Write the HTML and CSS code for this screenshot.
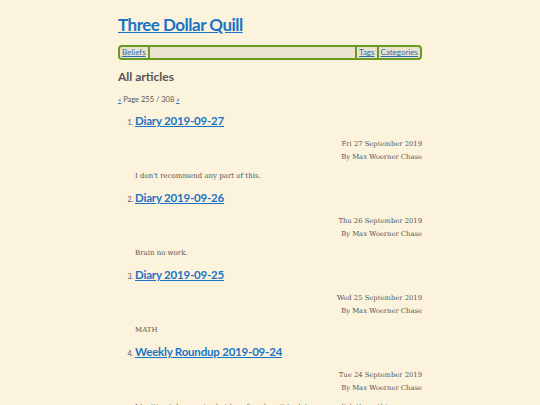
FILE: index.html
```html
<!DOCTYPE html>
<html>
<head>
<meta charset="utf-8">
<link rel="stylesheet" href="styles.css">
</head>
<body>
<div class="page">
  <h1 class="site-title"><a href="#">Three Dollar Quill</a></h1>
  <nav class="nav">
    <a href="#" class="nav-item">Beliefs</a>
    <span class="nav-spacer"></span>
    <a href="#" class="nav-item">Tags</a>
    <a href="#" class="nav-item">Categories</a>
  </nav>
  <h2 class="section-title">All articles</h2>
  <p class="pager"><a href="#">«</a> Page 255 / 308 <a href="#">»</a></p>
  <ol class="articles" start="1">
    <li class="article">
      <h3 class="article-title"><a href="#">Diary 2019-09-27</a></h3>
      <div class="meta"><div>Fri 27 September 2019</div><div>By Max Woerner Chase</div></div>
      <p class="excerpt">I don't recommend any part of this.</p>
    </li>
    <li class="article">
      <h3 class="article-title"><a href="#">Diary 2019-09-26</a></h3>
      <div class="meta"><div>Thu 26 September 2019</div><div>By Max Woerner Chase</div></div>
      <p class="excerpt">Brain no work.</p>
    </li>
    <li class="article">
      <h3 class="article-title"><a href="#">Diary 2019-09-25</a></h3>
      <div class="meta"><div>Wed 25 September 2019</div><div>By Max Woerner Chase</div></div>
      <p class="excerpt">MATH</p>
    </li>
    <li class="article">
      <h3 class="article-title"><a href="#">Weekly Roundup 2019-09-24</a></h3>
      <div class="meta"><div>Tue 24 September 2019</div><div>By Max Woerner Chase</div></div>
      <p class="excerpt">I legitimately surprised at how few days it took to accomplish these things.</p>
    </li>
  </ol>
</div>
</body>
</html>
```

FILE: styles.css
```css
html, body {
  margin: 0;
  padding: 0;
  background: #fbf3dc;
}
body {
  font-family: "DejaVu Serif", serif;
  color: #555;
}
.page {
  width: 304px;
  margin: 0 auto;
  padding-top: 14px;
}
a {
  color: #1b73c6;
}
.site-title {
  font-family: Lato, "Noto Sans", sans-serif;
  font-size: 17px;
  font-weight: 700;
  letter-spacing: -0.5px;
  line-height: 22px;
  margin: 0 0 9px 0;
}
.nav {
  display: flex;
  align-items: stretch;
  border: 2px solid #6a9a20;
  border-radius: 4px;
  background: #ebe3d0;
  height: 11px;
  font-family: Lato, "Noto Sans", sans-serif;
  font-size: 8px;
  line-height: 11px;
}
.nav-item {
  padding: 0 2px;
  color: #2a6cb0;
}
.nav-item:first-child {
  border-right: 2px solid #6a9a20;
}
.nav-spacer {
  flex: 1;
}
.nav-item + .nav-item,
.nav-spacer + .nav-item {
  border-left: 2px solid #6a9a20;
}
.section-title {
  font-family: Lato, "Noto Sans", sans-serif;
  font-size: 12px;
  font-weight: 700;
  color: #555;
  margin: 9px 0 0 0;
  line-height: 16px;
}
.pager {
  font-family: Lato, "Noto Sans", sans-serif;
  font-size: 7.5px;
  margin: 10px 0 0 0;
  line-height: 10px;
}
.articles {
  margin: 8px 0 0 0;
  padding-left: 17px;
  font-family: Lato, "Noto Sans", sans-serif;
  font-size: 7px;
}
.article-title {
  font-family: Lato, "Noto Sans", sans-serif;
  font-size: 11.5px;
  font-weight: 700;
  letter-spacing: -0.2px;
  line-height: 16px;
  margin: 0;
}
.meta {
  font-family: "DejaVu Serif", serif;
  font-size: 6.8px;
  line-height: 12.5px;
  text-align: right;
  margin-top: 9px;
}
.excerpt {
  font-family: "DejaVu Serif", serif;
  font-size: 7px;
  line-height: 12px;
  margin: 7px 0 8px 0;
}
```
